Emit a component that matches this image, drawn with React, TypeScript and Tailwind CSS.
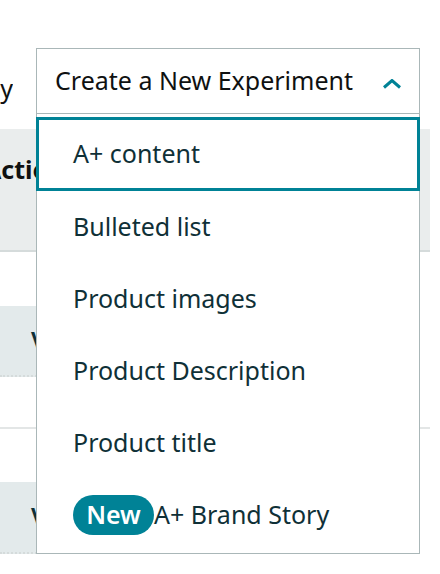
import { useState } from 'react'

const options = [
  { label: 'A+ content' },
  { label: 'Bulleted list' },
  { label: 'Product images' },
  { label: 'Product Description' },
  { label: 'Product title' },
  { label: 'A+ Brand Story', isNew: true },
]

function ChevronUp() {
  return (
    <svg width="20" height="10" viewBox="0 0 20 10" fill="none" className="mt-[6px]">
      <path d="M2 8.5 L10 1.5 L18 8.5" stroke="#008296" strokeWidth="3" strokeLinejoin="miter" />
    </svg>
  )
}

export default function App() {
  const [selected] = useState(0)

  return (
    <div className="relative w-[440px] h-[574px] overflow-hidden bg-white" style={{ fontFamily: '"Noto Sans", "Open Sans", sans-serif' }}>
      {/* table behind the dropdown */}
      <div className="w-[430px]">
        <div className="h-[129px] pt-[70px]">
          <div className="w-[13px] overflow-hidden flex justify-end">
            <span className="whitespace-nowrap text-[25px] text-[#0f1111]">Filter by</span>
          </div>
        </div>
        <div className="h-[123px] bg-[#eaeded] border-b-2 border-[#d5dbdb] pt-[22px]">
          <span className="block -ml-[16px] whitespace-nowrap text-[25px] font-bold text-[#0f1111]">Actions</span>
        </div>
        <div className="h-[177px] border-b-2 border-[#e3e6e6] pt-[54px]">
          <div className="w-[40px] h-[71px] bg-[#e3eaeb] border-b-2 border-dotted border-[#d5dbdb] flex items-center pl-[31px] overflow-hidden">
            <span className="text-[25px] font-semibold text-[#0f3037]">View</span>
          </div>
        </div>
        <div className="pt-[53px]">
          <div className="w-[40px] h-[72px] bg-[#e3eaeb] border-b-2 border-dotted border-[#d5dbdb] flex items-center pl-[31px] overflow-hidden">
            <span className="text-[25px] font-semibold text-[#0f3037]">View</span>
          </div>
        </div>
      </div>

      {/* experiment dropdown, open */}
      <div className="absolute left-[36px] top-[48px] w-[384px]">
        <button className="w-full h-[66px] border border-[#aab7b8] bg-white flex items-center justify-between pl-[18px] pr-[17px]">
          <span className="text-[25px] text-[#0f1111]">Create a New Experiment</span>
          <ChevronUp />
        </button>
        <ul className="border-x border-b border-[#aab7b8] bg-white pt-[3px] pb-[2px]">
          {options.map((o, i) => (
            <li
              key={o.label}
              className={`${i === 0 ? 'h-[74px]' : 'h-[72px]'} -mx-px border-[3px] flex items-center pl-[34px] text-[25px] text-[#0f3037] ${
                i === selected ? 'border-[#008296]' : 'border-transparent'
              }`}
            >
              {o.isNew && (
                <span className="h-[40px] w-[81px] rounded-full bg-[#008296] text-white font-semibold flex items-center justify-center">
                  New
                </span>
              )}
              {o.label}
            </li>
          ))}
        </ul>
      </div>
    </div>
  )
}
